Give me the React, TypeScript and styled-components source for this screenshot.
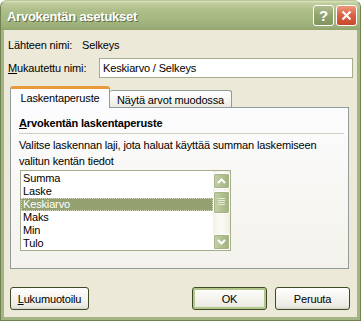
import React from "react";
import styled, { createGlobalStyle, css } from "styled-components";

const GlobalStyle = createGlobalStyle`
  html, body { margin: 0; padding: 0; background: #ffffff; }
  body {
    font-family: "Liberation Sans", Arial, sans-serif;
    font-size: 11px;
    letter-spacing: -0.15px;
    color: #000;
  }
  * { box-sizing: border-box; }
`;

const Window = styled.div`
  width: 361px;
  height: 321px;
  display: flex;
  flex-direction: column;
  background: #a3b584;
  border: 1px solid #6f8250;
  border-top-color: #b9c79a;
  border-radius: 7px 7px 0 0;
  overflow: hidden;
`;

const TitleBar = styled.div`
  height: 29px;
  flex: none;
  display: flex;
  align-items: center;
  padding: 0 3px 0 6px;
  background: linear-gradient(
    to bottom,
    #dbe4c0 0%,
    #c0cd9d 8%,
    #afbf8b 30%,
    #a6b781 60%,
    #9cae77 90%,
    #91a46c 100%
  );
`;

const TitleText = styled.div`
  flex: 1;
  font-family: "Liberation Sans", Arial, sans-serif;
  font-weight: bold;
  font-size: 13px;
  color: #ffffff;
  text-shadow: 1px 1px 0 #5d6b42;
  letter-spacing: -0.25px;
  padding-top: 1px;
`;

const CaptionButton = styled.div<{ $variant: "help" | "close" }>`
  width: 21px;
  height: 21px;
  margin-left: 2px;
  border: 1px solid #ffffff;
  border-radius: 3px;
  display: flex;
  align-items: center;
  justify-content: center;
  color: #fff;
  font-family: "Liberation Sans", Arial, sans-serif;
  font-weight: bold;
  font-size: 15px;
  ${(p) =>
    p.$variant === "help"
      ? css`
          background: linear-gradient(to bottom, #aebd8c 0%, #91a36f 50%, #82955e 100%);
        `
      : css`
          background: linear-gradient(to bottom, #ee9a7d 0%, #dc6446 45%, #c9472a 100%);
        `}
`;

const Client = styled.div`
  flex: 1;
  margin: 0 3px 3px 3px;
  background: #ece9d8;
  display: flex;
  flex-direction: column;
  padding: 9px 6px 0 4px;
`;

const FieldRow = styled.div<{ $h: number; $mt?: number }>`
  display: flex;
  align-items: center;
  height: ${(p) => p.$h}px;
  margin-top: ${(p) => p.$mt ?? 0}px;
`;

const Label = styled.div<{ $w?: number }>`
  width: ${(p) => (p.$w ? `${p.$w}px` : "auto")};
  line-height: 13px;
  white-space: nowrap;
`;

const U = styled.span`
  text-decoration: underline;
  text-underline-offset: 1px;
`;

const TextInput = styled.div`
  margin-left: auto;
  width: 254px;
  height: 20px;
  border: 1px solid #a5ae8a;
  background: #ffffff;
  display: flex;
  align-items: center;
  padding-left: 3px;
  margin-right: -2px;
`;

const TabStrip = styled.div`
  display: flex;
  align-items: flex-end;
  height: 21px;
  margin: 8px 0 0 2px;
  position: relative;
  z-index: 1;
`;

const Tab = styled.div<{ $active?: boolean; $w: number }>`
  width: ${(p) => p.$w}px;
  display: flex;
  align-items: center;
  justify-content: center;
  white-space: nowrap;
  border: 1px solid #919b9c;
  border-bottom: none;
  border-radius: 3px 3px 0 0;
  ${(p) =>
    p.$active
      ? css`
          height: 22px;
          margin-bottom: -1px;
          background: #fcfcfe;
          border-top: 3px solid #e69a3a;
          padding-bottom: 1px;
        `
      : css`
          height: 17px;
          border-left: none;
          background: linear-gradient(to bottom, #ffffff 0%, #f7f7f3 50%, #ebe9e0 100%);
          padding-top: 1px;
        `}
`;

const Panel = styled.div`
  margin-left: 2px;
  width: 339px;
  height: 162px;
  border: 1px solid #919b9c;
  background: linear-gradient(to bottom, #fcfcfe 0%, #f7f6f2 60%, #f3f2ec 100%);
  padding: 9px 0 0 8px;
  display: flex;
  flex-direction: column;
`;

const GroupTitle = styled.div`
  font-weight: bold;
  line-height: 13px;
`;

const Separator = styled.div`
  margin-top: 3px;
  width: 325px;
  height: 1px;
  background: #d0cebf;
`;

const Paragraph = styled.div`
  margin-top: 3px;
  line-height: 16px;
  width: 325px;
`;

const ListBox = styled.div`
  margin: 1px 0 0 1px;
  width: 211px;
  height: 81px;
  border: 1px solid #a5ae8a;
  background: #ffffff;
  display: flex;
`;

const ListItems = styled.div`
  flex: 1;
  padding-top: 1px;
  display: flex;
  flex-direction: column;
`;

const ListItem = styled.div<{ $selected?: boolean }>`
  height: 13px;
  line-height: 13px;
  padding-left: 2px;
  ${(p) =>
    p.$selected &&
    css`
      background: #93a070;
      color: #ffffff;
      outline: 1px dotted #d8d6c0;
      outline-offset: -1px;
    `}
`;

const ScrollBar = styled.div`
  width: 17px;
  display: flex;
  flex-direction: column;
  background: linear-gradient(to right, #f3f1e7 0%, #fbfaf6 50%, #efede3 100%);
`;

const ScrollButton = styled.div<{ $h?: number; $mt?: number }>`
  height: ${(p) => p.$h ?? 17}px;
  margin-top: ${(p) => p.$mt ?? 0}px;
  border: 1px solid #ffffff;
  box-shadow: inset 0 0 0 1px #a7b58a;
  border-radius: 2px;
  background: linear-gradient(to right, #c6d1a8 0%, #b3c191 50%, #a3b280 100%);
  display: flex;
  align-items: center;
  justify-content: center;
`;

const ButtonRow = styled.div`
  display: flex;
  margin-top: 18px;
  padding-left: 2px;
`;

const Button = styled.div<{ $w: number; $default?: boolean; $ml?: number }>`
  width: ${(p) => p.$w}px;
  height: 23px;
  margin-left: ${(p) => p.$ml ?? 0}px;
  border: 1px solid #3d4a26;
  border-radius: 3px;
  background: linear-gradient(to bottom, #ffffff 0%, #f6f5f0 40%, #ecebe4 85%, #d8d6cb 100%);
  display: flex;
  align-items: center;
  justify-content: center;
  ${(p) =>
    p.$default &&
    css`
      box-shadow: inset 0 0 0 2px #b3c78c;
    `}
`;

const ArrowIcon = ({ dir }: { dir: "up" | "down" }) => (
  <svg width="9" height="6" viewBox="0 0 9 6">
    <path
      d={dir === "up" ? "M1 5 L4.5 1.5 L8 5" : "M1 1 L4.5 4.5 L8 1"}
      fill="none"
      stroke="#ffffff"
      strokeWidth="2"
    />
  </svg>
);

const GripIcon = () => (
  <svg width="7" height="8" viewBox="0 0 7 8">
    {[0.5, 2.5, 4.5, 6.5].map((y) => (
      <line key={y} x1="0" x2="7" y1={y} y2={y} stroke="#e6ebd6" strokeWidth="1" />
    ))}
  </svg>
);

const items = ["Summa", "Laske", "Keskiarvo", "Maks", "Min", "Tulo"];

export default function App() {
  return (
    <>
      <GlobalStyle />
      <Window>
        <TitleBar>
          <TitleText>Arvokentän asetukset</TitleText>
          <CaptionButton $variant="help">?</CaptionButton>
          <CaptionButton $variant="close">
            <svg width="11" height="11" viewBox="0 0 11 11">
              <path d="M1.5 1.5 L9.5 9.5 M9.5 1.5 L1.5 9.5" stroke="#fff" strokeWidth="2.2" />
            </svg>
          </CaptionButton>
        </TitleBar>
        <Client>
          <FieldRow $h={13}>
            <Label $w={74}>Lähteen nimi:</Label>
            <Label>Selkeys</Label>
          </FieldRow>
          <FieldRow $h={20} $mt={6}>
            <Label>
              <U>M</U>ukautettu nimi:
            </Label>
            <TextInput>Keskiarvo / Selkeys</TextInput>
          </FieldRow>
          <TabStrip>
            <Tab $active $w={100}>
              Laskentaperuste
            </Tab>
            <Tab $w={122}>Näytä arvot muodossa</Tab>
          </TabStrip>
          <Panel>
            <GroupTitle>
              <U>A</U>rvokentän laskentaperuste
            </GroupTitle>
            <Separator />
            <Paragraph>
              Valitse laskennan laji, jota haluat käyttää summan laskemiseen valitun kentän tiedot
            </Paragraph>
            <ListBox>
              <ListItems>
                {items.map((it) => (
                  <ListItem key={it} $selected={it === "Keskiarvo"}>
                    {it}
                  </ListItem>
                ))}
              </ListItems>
              <ScrollBar>
                <ScrollButton $mt={2}>
                  <ArrowIcon dir="up" />
                </ScrollButton>
                <ScrollButton $h={23} $mt={2}>
                  <GripIcon />
                </ScrollButton>
                <ScrollButton $mt={20}>
                  <ArrowIcon dir="down" />
                </ScrollButton>
              </ScrollBar>
            </ListBox>
          </Panel>
          <ButtonRow>
            <Button $w={79}>
              <span>
                <U>L</U>ukumuotoilu
              </span>
            </Button>
            <Button $w={75} $default $ml={103}>
              OK
            </Button>
            <Button $w={75} $ml={8}>
              Peruuta
            </Button>
          </ButtonRow>
        </Client>
      </Window>
    </>
  );
}
